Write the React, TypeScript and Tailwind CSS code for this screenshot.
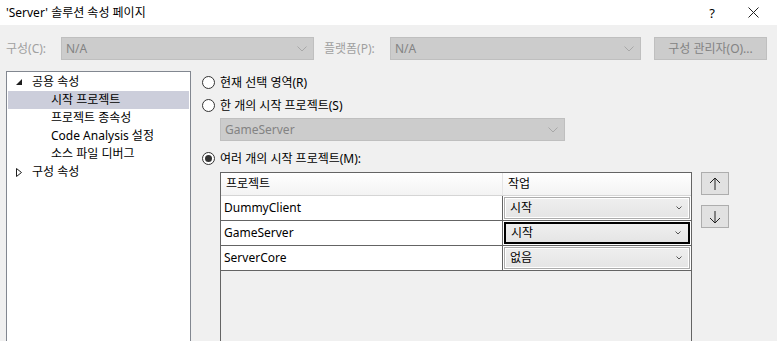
import React from 'react';

const font = { fontFamily: '"Noto Sans", "Noto Sans CJK KR", sans-serif' };

function Chevron({ className = '' }: { className?: string }) {
  return (
    <svg width="10" height="6" viewBox="0 0 10 6" className={className}>
      <path d="M0.5 0.5 L5 5 L9.5 0.5" fill="none" stroke="currentColor" strokeWidth="1" />
    </svg>
  );
}

function DisabledCombo({ text, className = '' }: { text: string; className?: string }) {
  return (
    <div className={`h-[23px] bg-[#cccccc] border border-[#bfbfbf] flex items-center justify-between pl-[4px] pr-[6px] ${className}`}>
      <span className="text-[#838383]">{text}</span>
      <Chevron className="text-[#a8a8a8]" />
    </div>
  );
}

function Radio({ checked, label }: { checked?: boolean; label: string }) {
  return (
    <div className="h-[23px] flex items-center">
      <span className="w-[13px] h-[13px] rounded-full border border-[#333333] bg-white flex items-center justify-center">
        {checked && <span className="w-[7px] h-[7px] rounded-full bg-[#333333]" />}
      </span>
      <span className="ml-[5px] text-black">{label}</span>
    </div>
  );
}

const treeItems = [
  { label: '공용 속성', level: 0, icon: 'open' },
  { label: '시작 프로젝트', level: 1, selected: true },
  { label: '프로젝트 종속성', level: 1 },
  { label: 'Code Analysis 설정', level: 1 },
  { label: '소스 파일 디버그', level: 1 },
  { label: '구성 속성', level: 0, icon: 'closed' },
];

const rows = [
  { name: 'DummyClient', action: '시작' },
  { name: 'GameServer', action: '시작', focused: true },
  { name: 'ServerCore', action: '없음' },
];

export default function App() {
  return (
    <div className="w-[777px] h-[341px] bg-[#f0f0f0] overflow-hidden text-[12px] leading-[16px] text-black" style={font}>
      {/* title bar */}
      <div className="h-[25px] bg-white flex items-center pl-[6px] pr-[18px]">
        <span className="flex-1">'Server' 솔루션 속성 페이지</span>
        <span className="text-[13px] mr-[33px]">?</span>
        <svg width="11" height="11" viewBox="0 0 11 11">
          <path d="M0.5 0.5 L10.5 10.5 M10.5 0.5 L0.5 10.5" stroke="#222" strokeWidth="1" />
        </svg>
      </div>

      {/* config row */}
      <div className="h-[46px] flex items-start pt-[12px] pl-[6px]">
        <span className="w-[55px] h-[23px] flex items-center text-[#a0a0a0]">구성(C):</span>
        <DisabledCombo text="N/A" className="w-[253px]" />
        <span className="ml-[10px] w-[66px] h-[23px] flex items-center text-[#a0a0a0]">플랫폼(P):</span>
        <DisabledCombo text="N/A" className="w-[251px]" />
        <div className="ml-[13px] w-[113px] h-[23px] bg-[#cccccc] border border-[#bfbfbf] flex items-center justify-center text-[#838383]">
          구성 관리자(O)...
        </div>
      </div>

      <div className="flex pl-[6px] h-[270px]">
        {/* tree */}
        <div className="w-[185px] h-[280px] bg-white border border-[#828790] pt-[1px] px-[1px]">
          {treeItems.map((t) => (
            <div key={t.label} className={`h-[18px] flex items-center ${t.selected ? 'bg-[#cccedb]' : ''}`}>
              {t.level === 0 ? (
                <>
                  <span className="w-[8px] ml-[8px] flex items-center">
                    {t.icon === 'open' ? (
                      <svg width="6" height="6" viewBox="0 0 6 6"><path d="M6 0 L6 6 L0 6 Z" fill="#1e1e1e" /></svg>
                    ) : (
                      <svg width="6" height="9" viewBox="0 0 6 9"><path d="M0.5 0.5 L5.5 4.5 L0.5 8.5 Z" fill="none" stroke="#1e1e1e" strokeWidth="1" /></svg>
                    )}
                  </span>
                  <span className="ml-[8px]">{t.label}</span>
                </>
              ) : (
                <span className="ml-[43px]">{t.label}</span>
              )}
            </div>
          ))}
        </div>

        {/* content */}
        <div className="flex-1 pl-[11px]">
          <Radio label="현재 선택 영역(R)" />
          <Radio label="한 개의 시작 프로젝트(S)" />
          <DisabledCombo text="GameServer" className="w-[345px] ml-[18px] mt-[1px]" />
          <div className="mt-[6px]">
            <Radio checked label="여러 개의 시작 프로젝트(M):" />
          </div>

          <div className="flex mt-[2px] ml-[18px]">
            <div className="w-[472px] h-[180px] border border-[#646464] flex flex-col">
              <div className="h-[23px] shrink-0 flex border-b border-[#d5d5d5] bg-gradient-to-b from-white to-[#f3f3f3]">
                <div className="w-[282px] border-r border-[#e5e5e5] pl-[5px] flex items-center">프로젝트</div>
                <div className="flex-1 pl-[5px] flex items-center">작업</div>
              </div>
              {rows.map((r) => (
                <div key={r.name} className="h-[25px] shrink-0 flex bg-white border-b border-[#646464]">
                  <div className="w-[282px] border-r border-[#646464] pl-[3px] flex items-center">{r.name}</div>
                  <div className="flex-1 p-[1px]">
                    <div
                      className={`h-full bg-gradient-to-b from-[#efefef] to-[#e5e5e5] flex items-center justify-between pl-[5px] pr-[7px] ${
                        r.focused ? 'border-2 border-black' : 'border border-[#acacac] shadow-[inset_0_0_0_1px_#ffffff]'
                      }`}
                    >
                      <span>{r.action}</span>
                      <svg width="6" height="4" viewBox="0 0 6 4">
                        <path d="M0.5 0.5 L3 3 L5.5 0.5" fill="none" stroke="#555" strokeWidth="1" />
                      </svg>
                    </div>
                  </div>
                </div>
              ))}
              <div className="flex-1 bg-[#f0f0f0]" />
            </div>

            <div className="ml-[9px] flex flex-col gap-[10px]">
              <div className="w-[28px] h-[23px] bg-[#e1e1e1] border border-[#adadad] flex items-center justify-center">
                <svg width="12" height="14" viewBox="0 0 12 14">
                  <path d="M6 1 L6 13 M1 6 L6 1 L11 6" fill="none" stroke="#222" strokeWidth="1" />
                </svg>
              </div>
              <div className="w-[28px] h-[23px] bg-[#e1e1e1] border border-[#adadad] flex items-center justify-center">
                <svg width="12" height="14" viewBox="0 0 12 14">
                  <path d="M6 1 L6 13 M1 8 L6 13 L11 8" fill="none" stroke="#222" strokeWidth="1" />
                </svg>
              </div>
            </div>
          </div>
        </div>
      </div>
    </div>
  );
}
